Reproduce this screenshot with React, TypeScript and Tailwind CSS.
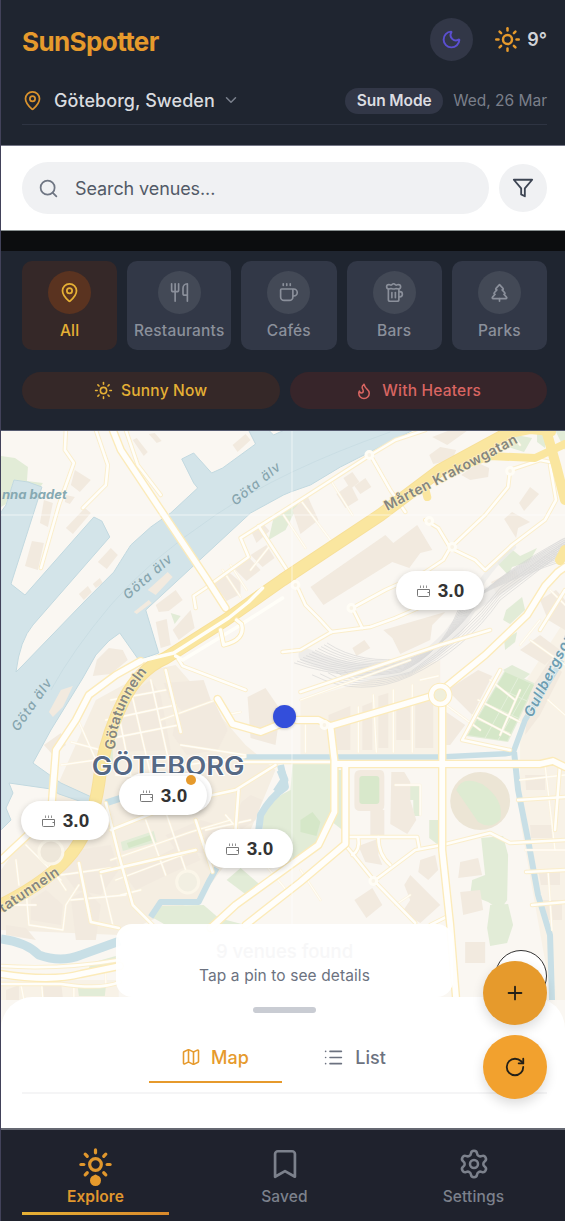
import {
  Beer, Bookmark, ChevronDown, Coffee, Flame, List, Map as MapIcon, MapPin,
  Moon, Plus, RotateCw, Search, Settings, Sun, TreePine, Utensils,
} from "lucide-react";
import type { ReactNode } from "react";

const WATER = [
  "M13 480 L27 482 L41 487 L10 584 L24 595 L93 517 L101 521 L109 537 L32 625 Q19 640 15 672 L22 665 L85 600 L113 572 Q128 548 130 545 L150 527 L170 513 L197 488 L193 483 L181 459 L193 453 L211 473 L222 468 L255 444 L248 430 H268 L273 435 L284 430 H413 L340 467 L310 485 L290 492 L283 495 L250 513 L145 610 L158 653 L138 660 L119 633 L108 641 L95 655 L82 678 L66 704 L50 730 L32 763 L60 783 L95 799 L93 806 L58 794 L50 789 L22 785 L8 783 L12 793 L5 808 L10 820 L0 830 V512 L5 505 Z",
];
const CANALS: [string, number][] = [
  ["M105 803 L145 790 L180 783", 7],
  ["M244 757 H440 L500 754 Q512 754 514 750 L525 720 L562 660", 5.5],
  ["M514 752 L518 790 L528 840 L538 895 L550 935 L552 1000", 6],
  ["M0 939 Q25 942 38 955 Q60 963 80 955 L119 941", 9],
  ["M150 917 L160 902 H198 L208 882 L216 868", 6],
  ["M258 832 L260 815 Q270 797 285 787 L280 765", 7],
  ["M280 770 L284 780 L276 792", 8],
];
const GREENS = [
  "M0 456 L14 458 L27 467 L26 481 L42 483 L38 489 L13 480 L5 504 L0 507Z",
  "M505 670 L536 684 L508 742 L466 736Z",
  "M262 812 Q272 798 290 790 L292 764 H331 V812 L319 842 L292 862 L262 848Z",
  "M335 770 H342 V830 L333 823Z",
  "M357 776 H382 V804 H357Z",
  "M396 786 H420 V816 H413 V800 H396Z",
  "M429 820 H438 V845 L429 838Z",
  "M151 917 L161 906 L203 905 L218 918 L245 925 H165Z",
  "M120 842 L153 831 L156 842 L122 851Z",
  "M226 880 L240 868 L262 887 L250 898Z",
  "M90 963 L115 956 V968 L88 968Z",
  "M77 988 L105 987 L104 996 H78Z",
  "M481 838 L503 836 L508 855 L507 900 L500 910 L488 902 L470 895 L472 880 L485 875Z",
  "M490 905 L508 904 L513 925 L507 943 L490 946 L487 928Z",
  "M506 610 L522 597 L525 610 L510 624 L503 620Z",
  "M497 563 L510 548 L520 556 L537 548 L529 562 L512 567 L508 575Z",
  "M503 670 L512 665 L530 674 L520 682Z",
  "M504 640 L517 632 L515 642 L505 650Z",
  "M505 446 L516 435 L532 438 L524 452Z",
  "M537 430 H545 V448 L537 442Z",
  "M555 430 L565 430 V450Z",
  "M170 613 L180 616 L174 624Z",
  "M98 755 L112 748 L112 765 L100 768Z",
  "M273 518 L300 500 L285 530 L268 540Z",
];
const BUILDINGS = [
  "M74 470 L90 480 L79 492 L70 485Z",
  "M65 495 L74 497 L69 504 L64 502Z",
  "M65 528 L84 508 L90 513 L72 534Z",
  "M43 500 L52 503 L47 527 L39 523Z",
  "M31 541 L43 543 L37 570 L24 566Z",
  "M110 548 L117 555 L106 569 L97 562Z",
  "M78 594 L87 586 L91 592 L83 600Z",
  "M92 584 L99 578 L102 583 L95 588Z",
  "M155 605 L175 590 L182 600 L168 611 L158 612Z",
  "M155 622 L166 619 L170 645 L160 648Z",
  "M172 630 L190 610 L194 628 L178 640Z",
  "M96 660 L108 648 L122 650 L127 660 L110 674 L92 676Z",
  "M213 583 L228 572 L240 582 L240 594 L226 601Z",
  "M234 569 L249 558 L260 570 L246 581Z",
  "M250 555 L266 545 L274 558 L262 567Z",
  "M250 530 L262 523 L269 531 L256 543Z",
  "M336 494 L350 484 L358 500 L345 508Z",
  "M343 478 L352 472 L359 482 L350 489Z",
  "M354 486 L365 478 L371 487 L360 494Z",
  "M292 510 L307 496 L318 520 L300 534Z",
  "M310 587 L385 535 L393 543 L417 525 L432 550 L420 553 L409 568 L392 562 L323 605Z",
  "M383 630 L445 612 L432 625 L430 640 L400 654 L392 638Z",
  "M352 648 L364 640 L370 648 L356 656Z",
  "M504 519 L512 512 L530 522 L518 528 L516 538Z",
  "M519 503 L530 487 L539 494 L524 511Z",
  "M461 475 L478 463 L489 468 L488 477 L470 480Z",
  "M429 455 L440 447 L456 450 L452 460 L433 464Z",
  "M432 437 L450 430 H468 L447 445Z",
  "M163 683 L203 680 L213 708 L186 716 L168 697Z",
  "M175 715 L213 700 L227 730 L217 750 L186 755 L172 735Z",
  "M247 697 L265 688 L280 710 L275 745 L250 738Z",
  "M43 745 L60 733 L65 745 L52 755Z",
  "M132 440 L136 438 L147 452 L143 456Z",
  "M148 434 L154 433 L161 441 L156 443Z",
  "M232 445 L245 434 L250 440 L237 452Z",
  "M120 700 L150 680 L160 695 L170 750 L115 752Z",
  "M60 870 L75 850 L110 845 L118 870 L100 895 L75 890Z",
  "M120 870 L150 860 L190 840 L200 860 L160 878 L135 890Z",
  "M165 835 L200 820 L235 830 L255 850 L240 860 L215 855 L175 850Z",
  "M241 802 L250 795 L262 800 L255 820 L240 830 L235 815Z",
  "M30 900 L45 890 L62 905 L60 925 L30 920Z",
  "M70 898 L85 890 L100 905 L95 940 L75 940Z",
  "M5 925 L25 928 L35 940 L5 935Z",
  "M42 985 L60 980 L62 998 H42Z",
  "M5 990 L18 985 V1000 H5Z",
  "M328 715 L350 706 V750 H330Z",
  "M362 706 L372 702 V750 H362Z",
  "M378 696 L388 693 V748 H378Z",
  "M396 706 Q404 698 410 706 V740 H396Z",
  "M415 704 L433 700 V748 H415Z",
  "M446 712 L465 725 L450 745 H446Z",
  "M357 772 H382 V810 H357Z",
  "M354 776 Q354 770 360 770 H380 Q384 770 384 776 V805 Q384 811 378 811 H360 Q354 811 354 805Z",
  "M391 772 H404 L410 782 V800 L416 820 L407 834 L390 824Z",
  "M370 810 H384 V835 H370Z",
  "M447 690 L478 670 L492 676 L472 715Z",
  "M354 900 L372 888 L382 905 L366 918Z",
  "M404 885 L410 875 L440 905 L420 923 L402 912 L410 900Z",
  "M420 860 L435 855 L438 870 L428 880 L418 872Z",
  "M358 846 L380 838 L378 855 L382 865 L365 862Z",
  "M460 862 L478 858 L482 875 L458 878Z",
  "M460 892 L480 890 L483 910 L463 915Z",
  "M465 942 H485 V963 H465Z",
  "M525 775 H545 V790 H526Z",
  "M530 825 H552 V838 H531Z",
  "M538 870 H560 V885 H541Z",
  "M540 900 L562 900 V920 H543Z",
  "M530 690 L550 660 L562 672 L540 715 L525 735Z",
  "M540 600 L556 590 L565 600 V630 L548 620Z",
  "M520 650 L540 635 L560 650 L545 665Z",
  "M491 582 L515 570 L522 580 L497 596Z",
];
const MAJOR = [
  "M112 430 L120 450 L158 507 L205 577 L225 608",
  "M565 567 L558 572 L545 586 L527 615 L485 655 L442 690",
  "M442 702 V850 L450 925 L456 1000",
  "M0 860 L30 832 L50 815 L55 750 L75 720 L88 695 L115 675 L140 661",
  "M335 764 H540 L553 761 L565 767",
  "M330 726 L334 760 V812 L318 845 L235 905 L210 928",
  "M345 765 V844 L300 882 L245 925",
  "M0 974 Q50 982 80 974 L119 966",
  "M296 720 L318 720 L330 726 L438 694",
  "M217 699 L232 724 L260 732 L280 724",
];
const MEDIUM = [
  "M65 430 L64 450 L73 463 L58 505 L40 568",
  "M95 430 L107 465 L105 485 L82 508",
  "M125 430 L137 465 L160 495",
  "M195 608 L193 596 L205 588 L248 557 L240 538 L300 500 L370 455 L395 440 L425 430",
  "M370 455 L390 490 L405 512",
  "M258 526 L282 563 L295 583 L305 605 L318 618 L331 632",
  "M331 632 L370 627 L395 618 L425 605",
  "M510 470 L508 487 L485 515 L450 548 L443 560 L425 572 L385 590 L352 608 L362 628",
  "M450 548 L438 528 L425 520",
  "M510 470 L540 460 L550 462",
  "M550 465 L556 500 L545 520 L512 545 L485 570 L475 560 L450 548",
  "M331 632 L300 650 L282 652",
  "M244 762 H330",
  "M0 966 Q60 970 118 960",
  "M0 984 L60 984 Q100 990 119 982",
  "M375 880 L415 850 L442 845 L490 833 L510 843 L565 840",
  "M345 837 H417 L419 848",
  "M345 845 L375 882 L415 923",
  "M378 837 Q378 855 390 865",
  "M358 838 Q360 850 352 855",
  "M175 655 L182 666 L245 690",
  "M105 803 L118 855 L132 905 L155 928",
  "M165 670 L180 732",
  "M78 863 L90 922 L118 928",
  "M300 692 L440 645 L490 630",
  "M430 925 L450 915",
  "M518 800 L565 797",
  "M526 872 L565 870",
  "M532 905 L565 902",
  "M560 765 L555 830",
  "M565 590 L540 630",
  "M500 670 L462 740 L510 750",
  "M195 820 L212 872", "M100 872 L195 850", "M110 830 L180 802 L235 790 L275 765",
  "M235 830 L238 790",
];
const MINOR = [
  "M110 700 L165 690", "M105 720 L175 705", "M102 740 L178 725", "M130 690 L150 775", "M150 680 L170 770",
  "M70 742 L100 750", "M60 765 L95 760", "M75 715 L95 760", "M115 775 L180 780", "M118 715 L130 775",
  "M110 860 L190 832 L230 820", "M115 880 L195 850", "M120 895 L140 890", "M145 820 L165 875", "M165 812 L185 870",
  "M60 875 L110 868", "M70 900 L125 895", "M25 890 L28 925 L62 930 L65 905 L78 885", "M5 905 L35 905",
  "M100 875 L112 925", "M45 860 L65 890", "M25 845 L60 880", "M15 860 L18 885",
  "M40 975 L42 1000", "M73 985 V1000", "M105 970 V985", "M20 985 L23 1000",
  "M222 570 L240 597", "M250 570 L270 545", "M300 500 L330 540", "M283 515 L305 548", "M230 565 L246 590",
  "M330 480 L352 515", "M500 430 L495 438", "M508 430 L520 445",
  "M530 640 L565 665", "M540 620 L520 645", "M550 590 L565 605", "M548 700 L565 715",
  "M520 690 L500 735", "M490 680 L515 700", "M478 700 L520 722", "M472 715 L510 735", "M446 705 L480 730",
  "M520 780 L565 775", "M545 765 L555 850", "M525 850 H565", "M548 870 L552 930",
  "M305 725 V752", "M358 752 V707", "M376 752 L373 695", "M393 752 V690", "M412 752 V685",
  "M420 680 L438 676", "M395 785 H420 V815", "M300 700 L410 660",
  "M300 870 L320 900", "M395 905 L410 895", "M225 815 L255 850", "M205 830 L250 820", "M240 835 L290 895",
  "M185 765 L245 757", "M180 745 L245 755", "M215 700 L160 720", "M225 715 L240 712",
];
const RAILS = [
  ...Array.from({ length: 12 }, (_, i) =>
    `M${294 + i * 3} ${663 - i * 1.8} Q${350 + i} ${682 - i * 1.5} ${400 + i} ${672 - i * 1.3} Q${440 + i} ${655 - i} ${458 + i * 2} ${610 - i} Q${478 + i} ${590 - i} ${565} ${560 - i * 2}`),
  ...Array.from({ length: 5 }, (_, i) => `M${312 + i * 8} ${675 - i} Q360 ${699 - i * 3} 410 ${676 - i} Q465 ${650 - i * 4} 500 ${600 - i * 3} L565 ${550 - i * 2}`),
];
const TUNNEL_ROAD = "M0 905 Q50 880 72 852 Q92 825 98 783 Q103 740 123 700 Q138 670 165 658 L225 620 L282 580 L380 515 L440 470 Q490 443 510 432";

function CityMap() {
  return (
    <svg className="absolute inset-x-0 top-0 h-[600px] w-full" viewBox="0 431 565 600" preserveAspectRatio="none" aria-hidden="true">
      <rect y="430" width="565" height="601" fill="#faf7f2" />
      <path d="M95 700 L150 670 L175 665 L245 745 L275 770 L250 830 L200 898 L118 935 L0 930 V870 L50 800Z" fill="#f5eee2" />
      <path d="M300 700 L440 660 V755 H300Z M520 690 L565 620 V1000 H552 L520 820Z M0 980 H118 V1000 H0Z" fill="#f8f2e7" />
      {GREENS.map((d) => <path key={d} d={d} fill="#e2ecd7" />)}
      {BUILDINGS.map((d) => <path key={d} d={d} fill="#f2eadf" />)}
      <path d="M505 672 L534 685 L507 741 L468 735Z M300 820 L312 812 L320 822 L316 836 L300 832Z M126 843 L150 835 L152 840 L128 848Z" fill="#d5e7c8" />
      <path d="M496 687 L527 701 M487 704 L518 718 M478 720 L510 733 M518 678 L485 738 M530 684 L498 740" stroke="#e4efda" strokeWidth="1" />
      <ellipse cx="480" cy="801" rx="30" ry="29" fill="#ece5d5" />
      <path d="M456 790 Q462 775 482 784 Q505 800 500 820 Q490 830 478 822Z" fill="#deebd2" />
      <rect x="359" y="776" width="20" height="28" rx="3" fill="#d8e8cb" />
      {WATER.map((d) => <path key={d} d={d} fill="#d3e4e9" stroke="#c2d9e0" strokeWidth="1" />)}
      <g fill="none" stroke="#c8dfe6" strokeLinejoin="round">
        {CANALS.map(([d, w]) => <path key={d} d={d} strokeWidth={w} />)}
      </g>
      <path d="M147 590 L167 572 L172 577 L155 595Z M133 612 L148 600 L151 603 L136 614Z M48 712 L60 690 L72 686 L62 707 L52 717Z" fill="#f2eadf" />
      <path d="M50 690 Q72 650 110 605 T215 515 T390 432" fill="none" stroke="#c2d8df" strokeWidth=".6" />
      <g fill="none" strokeLinecap="round">
        <path d="M305 655 Q355 678 405 668 Q445 652 470 606 L565 545" stroke="#ebe9e7" strokeWidth="14" opacity=".75" />
        <path d="M470 606 Q480 575 513 547" stroke="#eeecea" strokeWidth="6" opacity=".8" />
        <g stroke="#d2d2d2" strokeWidth=".8" opacity=".7">
          {RAILS.map((d) => <path key={d} d={d} />)}
        </g>
      </g>
      <g fill="none" strokeLinecap="round" strokeLinejoin="round">
        <g stroke="#fcf3dd" strokeWidth="2.4">{MINOR.map((d) => <path key={d} d={d} />)}</g>
        <g stroke="#fffdf7" strokeWidth="1.3">{MINOR.map((d) => <path key={d} d={d} />)}</g>
        <g stroke="#fbeecb" strokeWidth="4.5">{MEDIUM.map((d) => <path key={d} d={d} />)}</g>
        <g stroke="#fffefa" strokeWidth="2.6">{MEDIUM.map((d) => <path key={d} d={d} />)}</g>
        <g stroke="#fcebba" strokeWidth="8.5">{MAJOR.map((d) => <path key={d} d={d} />)}</g>
        <g stroke="#fffefb" strokeWidth="5.8">{MAJOR.map((d) => <path key={d} d={d} />)}</g>
        <path d={TUNNEL_ROAD} stroke="#f7df98" strokeWidth="13" />
        <path d={TUNNEL_ROAD} stroke="#fae69f" strokeWidth="11.2" />
        <path d="M424 485 L427 497 M450 470 L490 456 L535 458 L552 450 L565 444 M500 436 L530 430 L552 432" stroke="#fae69f" strokeWidth="8" />
        <path d="M546 430 L556 465 L565 500 M565 550 L560 560" stroke="#fae69f" strokeWidth="10" />
        <path d="M140 661 L173 653 L228 618 L248 602 L262 588 M175 656 L182 660 L235 628 L282 598" stroke="#fffef8" strokeWidth="3.5" />
        <path d="M220 630 L223 645 Q245 640 241 624 L236 620" stroke="#fcebba" strokeWidth="5" />
        <path d="M220 630 L223 645 Q245 640 241 624 L236 620" stroke="#fffef8" strokeWidth="3.4" />
        <circle cx="440" cy="695" r="9" fill="#f0efdb" stroke="#fcebba" strokeWidth="6.500" />
        <circle cx="440" cy="695" r="9" stroke="#fffefb" strokeWidth="4.500" />
        {[[510, 471], [452, 547], [351, 608], [324, 725], [373, 881], [369, 455], [429, 521], [295, 585]].map(([x, y]) => (
          <circle key={x} cx={x} cy={y} r="3.4" fill="#faf4e6" stroke="#fffdf6" strokeWidth="3" />
        ))}
        <circle cx="50" cy="852" r="12" fill="#eee7da" stroke="#fbf6e9" strokeWidth="3" />
        <circle cx="187" cy="882" r="11" fill="#f2efe2" stroke="#fbf6e9" strokeWidth="3" />
      </g>
      <path d="M0 515 H565 M291.500 431 V1031" stroke="#fff" strokeWidth="1.5" opacity=".4" />
      <g fontFamily="Inter, Noto Sans, sans-serif">
        <g fill="#86a4ae" fontSize="13" fontWeight="500" fontStyle="italic">
          <text transform="translate(127 600) rotate(-41)" textLength="60">Göta älv</text>
          <text transform="translate(235 506) rotate(-39)" textLength="59">Göta älv</text>
          <text transform="translate(17 732) rotate(-55)" textLength="60">Göta älv</text>
        </g>
        <text x="1" y="499" fill="#86a9b2" fontSize="12.500" fontWeight="700" fontStyle="italic" textLength="65" lengthAdjust="spacingAndGlyphs">nna badet</text>
        <g fill="#85867e" stroke="#fbeec4" strokeWidth="1.500" paintOrder="stroke" fontSize="14" fontWeight="600">
          <text transform="translate(387 511) rotate(-27.500)" textLength="148">Mårten Krakowgatan</text>
          <path id="tunnel" d="M114 750 Q117 706 148 670" fill="none" stroke="none" />
          <text textLength="86"><textPath href="#tunnel">Götatunneln</textPath></text>
          <text transform="translate(2 913) rotate(-34)" textLength="69">tatunneln</text>
        </g>
        <text transform="translate(532 718) rotate(-63)" fill="#6e9db0" stroke="#e6eff0" strokeWidth="1.500" paintOrder="stroke" fontSize="14" fontWeight="600" fontStyle="italic" textLength="92">Gullbergson</text>
        <text x="91" y="775" fill="#566985" stroke="#fff" strokeWidth="2" paintOrder="stroke" fontSize="25" fontWeight="600" textLength="153" lengthAdjust="spacingAndGlyphs">GÖTEBORG</text>
      </g>
    </svg>
  );
}

const PIN_SHAPE = "absolute h-[39px] w-[88px] rounded-full bg-white shadow-[0_2px_6px_rgba(0,0,0,0.2)]";

function VenuePin({ className }: { className: string }) {
  return (
    <div className={`${PIN_SHAPE} flex items-center justify-center gap-[7px] ${className}`}>
      <svg width="15" height="15" viewBox="0 0 15 15" fill="none" stroke="#777" strokeWidth="1">
        <path d="M1.500 6.500H13.500V12.500Q13.500 13.500 12.500 13.500H2.500Q1.500 13.500 1.500 12.500Z M11.500 9.500H13.500" />
        <path d="M4.500 2.500V5M7.500 2.500V5M10.500 2.500V5" strokeWidth=".8" />
      </svg>
      <span className="font-['Liberation_Sans',sans-serif] text-[19px] font-bold leading-none text-[#333]">3.0</span>
    </div>
  );
}

function Category({ icon, label, active, wide }: { icon: ReactNode; label: string; active?: boolean; wide?: boolean }) {
  return (
    <button className={`flex h-[89px] flex-col items-center rounded-[10px] pt-[10px] ${wide ? "w-[104px] shrink-0" : "min-w-0 flex-1"} ${active ? "bg-[#352828] text-[#e5b035]" : "bg-[#323847] text-[#8b909b]"}`}>
      <span className={`flex size-[43px] items-center justify-center rounded-full ${active ? "bg-[#5a3320]" : "bg-[#434956]"}`}>{icon}</span>
      <span className="mt-[7px] text-[15.5px] font-medium leading-[20px] tracking-[0.2px]">{label}</span>
    </button>
  );
}

export default function App() {
  return (
    <div className="relative flex h-[1221px] w-[565px] flex-col overflow-hidden border-l border-[#42425a] bg-[#1f2530] font-[Inter,sans-serif]">
      <header className="h-[146px] shrink-0 border-b border-[#747686] pl-[21px] pr-[18px] pt-[18px]">
        <div className="flex h-[43px] items-center justify-between">
          <h1 className="pt-[3px] text-[26px] font-bold tracking-[-0.6px] text-[#e69a2c]">SunSpotter</h1>
          <div className="flex items-center">
            <button className="mr-[21px] flex size-[43px] items-center justify-center rounded-full bg-[#323747]">
              <Moon size={21} strokeWidth={2.2} className="text-[#5b4fd0]" />
            </button>
            <Sun size={27} strokeWidth={2.2} className="text-[#e69a2c]" />
            <span className="ml-[6px] text-[18px] font-semibold text-[#d0d2d7]">9°</span>
          </div>
        </div>
        <div className="mt-[15px] flex h-[49px] items-center justify-between border-b border-[#2e3442]">
          <button className="flex items-center">
            <MapPin size={21} className="text-[#d9922d]" />
            <span className="ml-[11px] text-[18px] font-medium tracking-[0.05px] text-[#d9dbdf]">Göteborg, Sweden</span>
            <ChevronDown size={18} className="ml-[7px] text-[#7b818d]" />
          </button>
          <div className="flex items-center gap-[10px] pt-px text-[15.5px]">
            <span className="flex h-[26px] w-[98px] items-center justify-center rounded-full bg-[#323747] font-semibold tracking-[-0.1px] text-[#dcdde1]">Sun Mode</span>
            <span className="text-[#7a7f8a]">Wed, 26 Mar</span>
          </div>
        </div>
      </header>
      <div className="flex h-[84px] shrink-0 items-center gap-[10px] bg-white pl-[21px] pr-[18px]">
        <div className="flex h-[52px] flex-1 items-center rounded-full bg-[#f0f1f3] pl-[16px]">
          <Search size={21} className="text-[#6f7683]" />
          <span className="ml-[16px] text-[18px] tracking-[-0.1px] text-[#525a67]">Search venues...</span>
        </div>
        <button className="flex size-[48px] items-center justify-center rounded-full bg-[#f0f1f3] text-[#3d4553]">
          <svg width="22" height="22" viewBox="0 0 24 24" fill="none" stroke="currentColor" strokeWidth="2" strokeLinecap="round" strokeLinejoin="round"><path d="M22 3H2l8 9.460V19l4 2v-8.540L22 3z" /></svg>
        </button>
      </div>
      <div className="h-[21px] shrink-0 border-t border-[#899090] bg-[#0c0d0f]" />
      <section className="h-[180px] shrink-0 border-b border-[#565b70] pl-[21px] pr-[18px] pt-[10px]">
        <div className="flex gap-[10px]">
          <Category icon={<MapPin size={21} />} label="All" active />
          <Category icon={<Utensils size={21} strokeWidth={1.900} />} label="Restaurants" wide />
          <Category icon={<Coffee size={21} strokeWidth={1.900} />} label="Cafés" />
          <Category icon={<Beer size={21} strokeWidth={1.900} />} label="Bars" />
          <Category icon={<TreePine size={21} strokeWidth={1.900} />} label="Parks" />
        </div>
        <div className="mt-[22px] flex gap-[10px] text-[15.5px] font-medium tracking-[0.2px]">
          <button className="flex h-[37px] flex-1 items-center justify-center gap-[8px] rounded-full bg-[#352828] text-[#e5b035]"><Sun size={19} />Sunny Now</button>
          <button className="flex h-[37px] flex-1 items-center justify-center gap-[9px] rounded-full bg-[#37252a] text-[#d96562]"><Flame size={18} />With Heaters</button>
        </div>
      </section>

      <main className="relative flex flex-1 flex-col justify-end overflow-hidden">
        <CityMap />
        <span className="absolute left-[272px] top-[274px] size-[23px] rounded-full bg-[#334edb] shadow-[0_1px_3px_rgba(0,0,0,0.2)]" />
        <VenuePin className="left-[395px] top-[140px]" />
        <VenuePin className="left-[20px] top-[370px]" />
        <div className={`${PIN_SHAPE} left-[123px] top-[342px]`} />
        <VenuePin className="left-[118px] top-[345px]" />
        <span className="absolute left-[185px] top-[344px] size-[10px] rounded-full bg-[#e69a2c]" />
        <VenuePin className="left-[204px] top-[398px]" />
        <div className="relative ml-[115px] flex h-[73px] w-[337px] flex-col items-center rounded-2xl bg-white/95 pt-[16px]">
          <div className="text-[18.5px] font-medium leading-[23px] text-[#f7f7f8]">9 venues found</div>
          <div className="mt-[3px] text-[15.5px] leading-[20px] tracking-[0.1px] text-[#6c7280]">Tap a pin to see details</div>
        </div>
        <div className="relative h-[131px] rounded-t-[32px] bg-white pl-[21px] pr-[18px] pt-[10px]">
          <div className="mx-auto h-[6px] w-[63px] rounded-full bg-[#c9ccd3]" />
          <div className="flex h-[81px] justify-center gap-[10px] border-b-2 border-[#f5f5f6] pr-[3px] pt-[20px] text-[18px] font-medium">
            <button className="flex h-[50px] w-[133px] items-center justify-center gap-[10px] border-b-2 border-[#e69a2c] text-[#e69a2c]"><MapIcon size={20} strokeWidth={1.900} />Map</button>
            <button className="flex h-[49px] w-[126px] items-center justify-center gap-[11px] text-[#6c7280]"><List size={21} strokeWidth={1.900} />List</button>
          </div>
        </div>
      </main>

      <nav className="flex h-[93px] shrink-0 border-t-2 border-[#656872] bg-[#1f222d] pl-[21px] pr-[18px] text-[15.5px] font-medium tracking-[0.15px] text-[#7c818c]">
        <div className="relative flex w-[147px] flex-col items-center pt-[17px] text-[#e0972d]">
          <Sun size={35} strokeWidth={2.200} />
          <span className="absolute top-[45px] size-[11px] rounded-full bg-[#e69a2c]" />
          <span className="mt-[5px] font-semibold leading-[20px] tracking-[0.1px]">Explore</span>
          <span className="absolute bottom-[6px] h-[3px] w-full bg-linear-to-r from-[#e5b035] to-[#d9892b]" />
        </div>
        <div className="flex flex-1 flex-col items-center pt-[17px]"><Bookmark size={34} strokeWidth={1.900} /><span className="mt-[6px] leading-[20px]">Saved</span></div>
        <div className="flex w-[147px] flex-col items-center pt-[18px]"><Settings size={32} strokeWidth={1.900} /><span className="mt-[7px] leading-[20px]">Settings</span></div>
      </nav>

      <span className="absolute left-[494px] top-[950px] size-[52px] rounded-full border-[1.5px] border-[#333] bg-white" />
      <button className="absolute left-[481.500px] top-[961px] flex size-[64px] items-center justify-center rounded-full bg-[#e69a2c] text-[#242018] shadow-[0_5px_12px_rgba(0,0,0,0.14)]"><Plus size={22} /></button>
      <button className="absolute left-[481.500px] top-[1035px] flex size-[64px] items-center justify-center rounded-full bg-[#f2a12e] text-[#242018] shadow-[0_5px_12px_rgba(0,0,0,0.14)]"><RotateCw size={22} /></button>
    </div>
  );
}
